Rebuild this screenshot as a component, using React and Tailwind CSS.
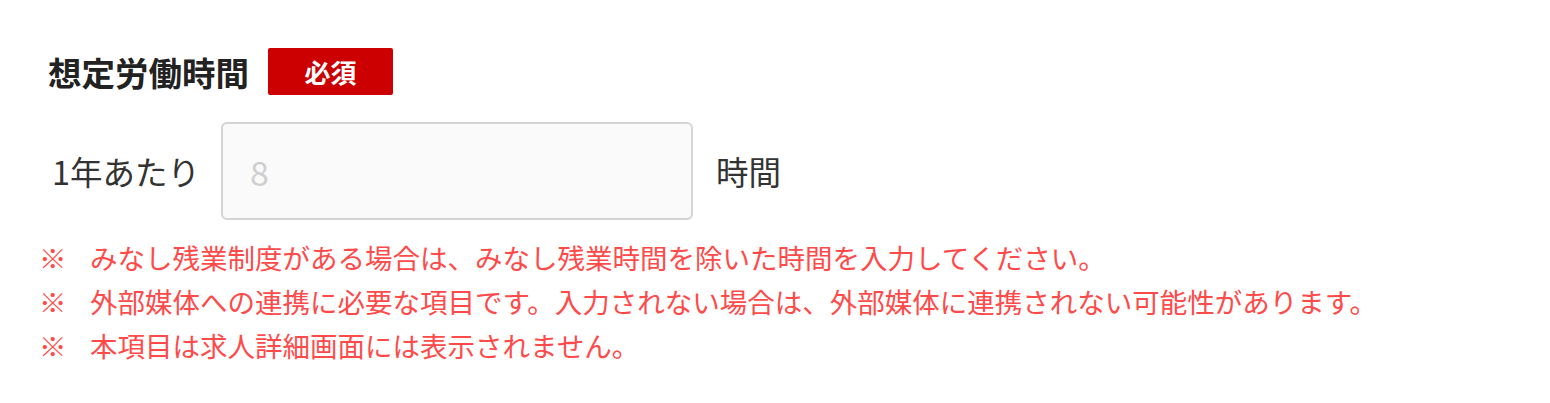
export default function App() {
    const notes = [
        "みなし残業制度がある場合は、みなし残業時間を除いた時間を入力してください。",
        "外部媒体への連携に必要な項目です。入力されない場合は、外部媒体に連携されない可能性があります。",
        "本項目は求人詳細画面には表示されません。",
    ];

    return (
        <div className="min-h-screen bg-white pl-[39px] pt-[48px] font-['Noto_Sans_CJK_JP','Noto_Sans',sans-serif] text-[#333]">
            <div className="flex items-center pl-[9px]">
                <h2 className="text-[33.5px] font-bold leading-none text-[#222]">想定労働時間</h2>
                <span className="ml-[19px] flex h-[47px] w-[125px] items-center justify-center rounded-[2px] bg-[#cc0000] text-[26px] font-bold leading-none text-white">
                    必須
                </span>
            </div>

            <div className="mt-[27px] flex items-center pl-[13px]">
                <label className="text-[32.5px] leading-none">1年あたり</label>
                <input
                    type="text"
                    placeholder="8"
                    className="ml-[21px] h-[98px] w-[472px] rounded-[6px] border-2 border-[#d4d4d4] bg-[#fafafa] px-[27px] text-[34px] outline-none placeholder:text-[#cfcfcf]"
                />
                <span className="ml-[23px] text-[32.5px] leading-none">時間</span>
            </div>

            <ul className="mt-[15px] text-[27.5px] leading-[44px] text-[#ff4a4a]">
                {notes.map((note, idx) => (
                    <li className="flex" key={idx}>
                        <span className="w-[51px] shrink-0">※</span>
                        <span>{note}</span>
                    </li>
                ))}
            </ul>
        </div>
    );
}
